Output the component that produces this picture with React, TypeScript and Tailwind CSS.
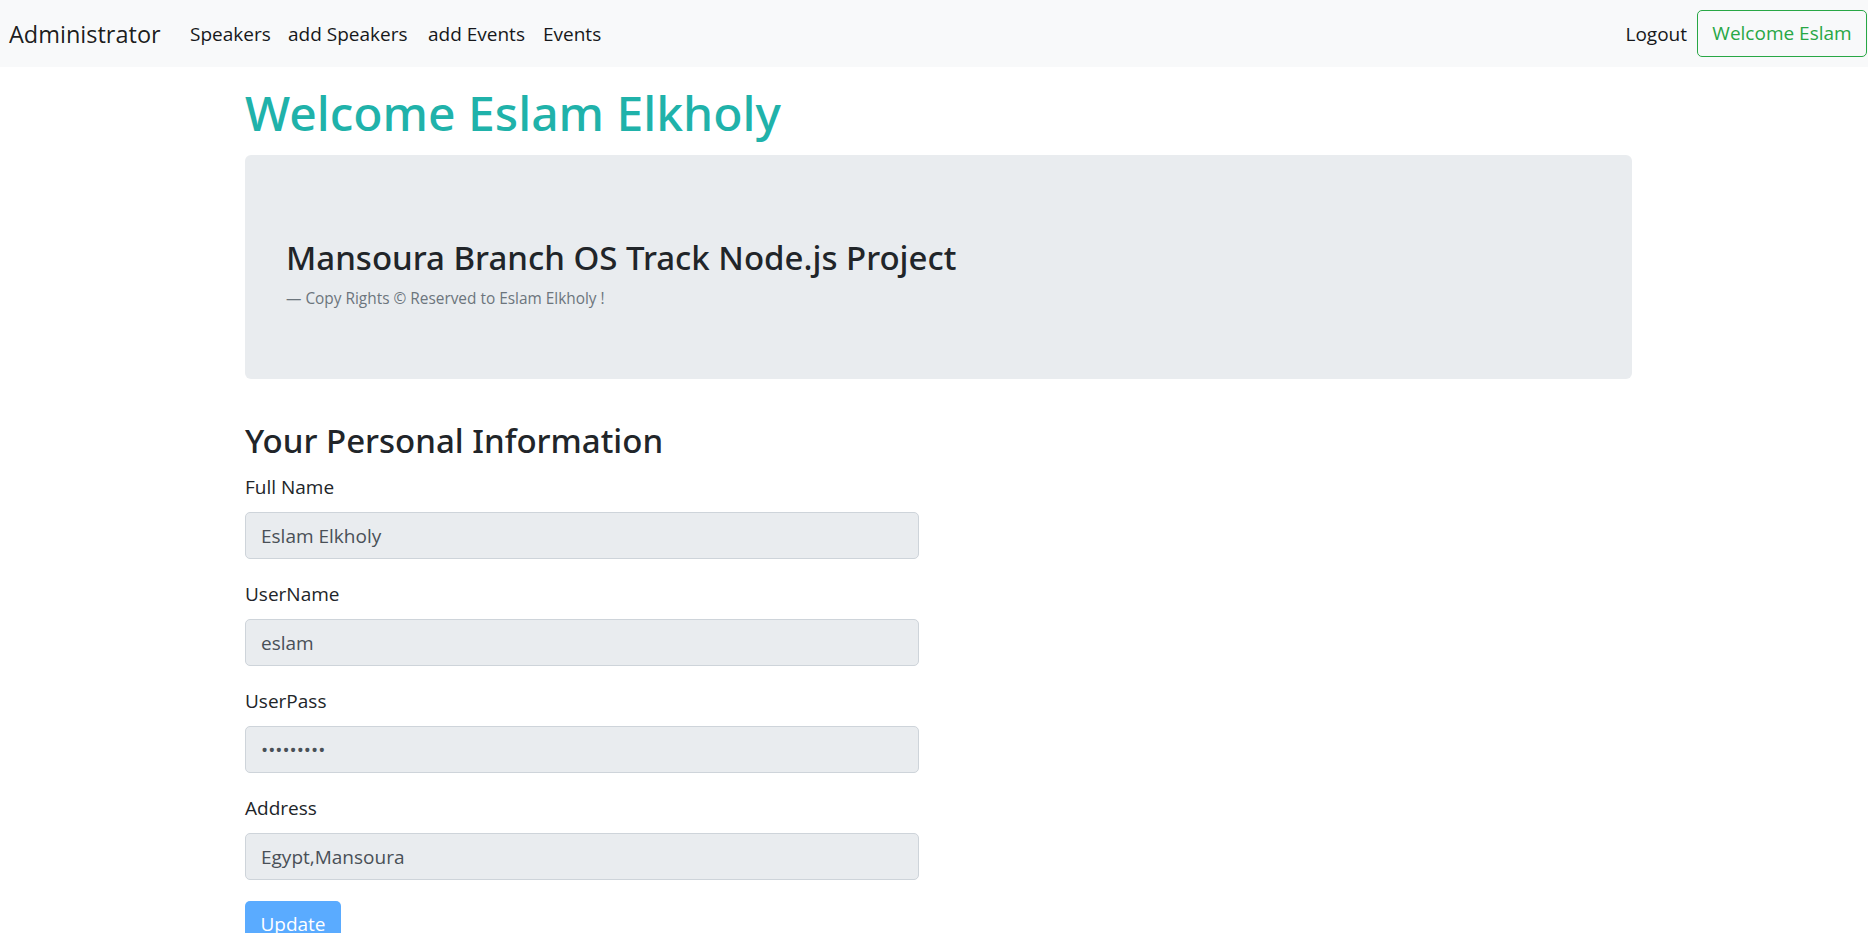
import { useState } from "react";

type Field = {
  label: string;
  value: string;
  type?: string;
};

const navLinks = [
  { label: "Speakers", width: "w-[98px]" },
  { label: "add Speakers", width: "w-[140px]" },
  { label: "add Events", width: "w-[115px]" },
  { label: "Events", width: "w-[80px]" },
];

export default function App() {
  const [fields] = useState<Field[]>([
    { label: "Full Name", value: "Eslam Elkholy" },
    { label: "UserName", value: "eslam" },
    { label: "UserPass", value: "123456789", type: "password" },
    { label: "Address", value: "Egypt,Mansoura" },
  ]);

  return (
    <div className="min-h-screen bg-white font-['Open_Sans','Noto_Sans',sans-serif] text-[#212529]">
      {/* Top navbar */}
      <nav className="flex h-[67px] items-center bg-[#f8f9fa] pl-[9px] pr-px">
        <a className="w-[181px] text-[23.5px] leading-[30px] text-black/90">
          Administrator
        </a>

        <ul className="flex">
          {navLinks.map((link) => (
            <li
              key={link.label}
              className={`${link.width} text-[19px] leading-[30px] text-[#16181b]`}
            >
              {link.label}
            </li>
          ))}
        </ul>

        <div className="ml-auto flex items-center gap-[10px]">
          <a className="text-[19px] leading-[30px] text-[#16181b]">Logout</a>
          <button className="h-[47px] w-[170px] rounded-[5px] border border-[#28a745] text-[19px] text-[#28a745]">
            Welcome Eslam
          </button>
        </div>
      </nav>

      <main className="ml-[245px] w-[1387px]">
        <h1 className="mt-[16px] font-['Noto_Sans',sans-serif] text-[48px] font-medium leading-[60px] text-[#20b2aa]">
          Welcome Eslam Elkholy
        </h1>

        {/* Jumbotron */}
        <div className="mt-[12px] h-[224px] rounded-[6px] bg-[#e9ecef] px-[41px] pt-[80px]">
          <h2 className="font-['Noto_Sans',sans-serif] text-[33px] font-medium leading-[46px] text-[#212529]">
            Mansoura Branch OS Track Node.js Project
          </h2>
          <p className="mt-[7px] text-[15.4px] leading-[22px] text-[#6c757d]">
            — Copy Rights © Reserved to Eslam Elkholy !
          </p>
        </div>

        {/* Personal information form */}
        <h2 className="mt-[39px] mb-[8px] font-['Noto_Sans',sans-serif] text-[33px] font-medium leading-[46px] text-[#212529]">
          Your Personal Information
        </h2>

        <form className="w-[674px]">
          {fields.map((field) => (
            <div key={field.label} className="mb-[20px]">
              <label className="mb-[10px] block text-[19px] leading-[30px]">
                {field.label}
              </label>
              <input
                readOnly
                type={field.type ?? "text"}
                value={field.value}
                className="block h-[47px] w-full rounded-[5px] border border-[#ced4da] bg-[#e9ecef] px-[15px] text-[19px] text-[#495057] outline-none"
              />
            </div>
          ))}

          <button
            type="button"
            className="mt-px h-[47px] w-[96px] rounded-[5px] bg-[#5aabff] text-[19px] text-white"
          >
            Update
          </button>
        </form>
      </main>
    </div>
  );
}
